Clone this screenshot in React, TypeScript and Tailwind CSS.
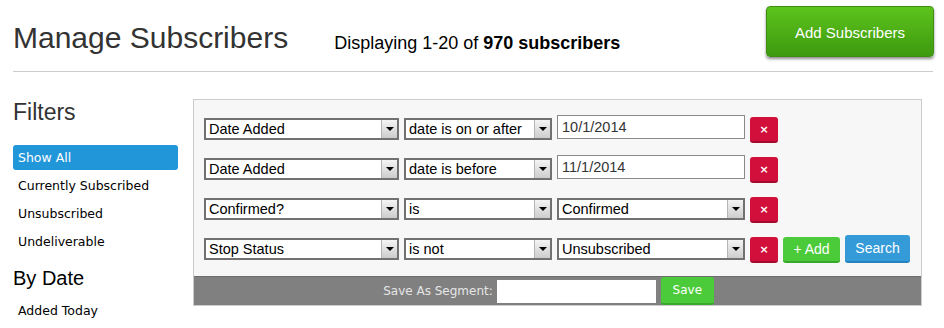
import React from "react";

const sideItems = ["Currently Subscribed", "Unsubscribed", "Undeliverable"];

function Select({ value, width }: { value: string; width: string }) {
  return (
    <div
      className={`${width} mt-[3px] h-[22px] flex items-stretch border-2 border-[#717171] bg-white`}
    >
      <span className="flex-1 pl-[3px] text-[14.5px] leading-[18px] text-black truncate">{value}</span>
      <span className="w-[16px] flex items-center justify-center border-l border-[#b5b5b5] bg-gradient-to-b from-[#f4f4f4] to-[#cdcdcd]">
        <span className="w-0 h-0 border-l-[4px] border-r-[4px] border-t-[4px] border-l-transparent border-r-transparent border-t-black" />
      </span>
    </div>
  );
}

function TextBox({ value }: { value: string }) {
  return (
    <div className="w-[188px] h-[24px] border border-[#8a8a8a] bg-white pl-[4px] text-[14.5px] leading-[22px] text-[#333]">
      {value}
    </div>
  );
}

function RemoveButton() {
  return (
    <button className="mt-[2px] w-[28px] h-[26px] rounded-[3px] bg-[#d20e3b] border-b-2 border-[#a50a2c] text-white text-[11px] font-bold leading-none font-['DejaVu_Sans',sans-serif]">
      ×
    </button>
  );
}

const rows = [
  { field: "Date Added", op: "date is on or after", value: "10/1/2014", text: true },
  { field: "Date Added", op: "date is before", value: "11/1/2014", text: true },
  { field: "Confirmed?", op: "is", value: "Confirmed", text: false },
  { field: "Stop Status", op: "is not", value: "Unsubscribed", text: false },
];

export default function App() {
  return (
    <div className="w-[944px] h-[328px] overflow-hidden bg-white pl-[13px] pr-[10px] font-['Liberation_Sans',Arial,sans-serif]">
      <header className="h-[71px] flex items-start">
        <h1 className="pt-[20px] text-[30px] leading-[36px] text-[#333]">Manage Subscribers</h1>
        <p className="ml-[46px] pt-[32px] text-[18px] leading-[22px] text-black">
          Displaying 1-20 of <strong className="font-bold">970 subscribers</strong>
        </p>
        <button className="ml-auto mt-[6px] w-[168px] h-[51px] pt-[3px] rounded-[4px] border border-[#3f8e12] bg-gradient-to-b from-[#5dc31c] to-[#3d9a0f] shadow-[0_2px_3px_rgba(0,0,0,0.45)] text-white text-[15px]">
          Add Subscribers
        </button>
      </header>
      <div className="h-px w-[920px] bg-[#cccccc]" />

      <div className="mt-[27px] flex items-start">
        <aside className="w-[165px] shrink-0">
          <h2 className="text-[23px] leading-[26px] text-[#333]">Filters</h2>
          <ul className="mt-[20px] flex flex-col gap-[3px] font-['DejaVu_Sans',Verdana,sans-serif] text-[12.5px]">
            <li className="h-[25px] rounded-[3px] bg-[#2196d9] pl-[5px] leading-[25px] text-white">Show All</li>
            {sideItems.map((item) => (
              <li key={item} className="h-[25px] pl-[5px] leading-[25px] text-black">
                {item}
              </li>
            ))}
          </ul>
          <h3 className="mt-[12px] text-[20px] leading-[24px] text-black">By Date</h3>
          <p className="mt-[8px] h-[25px] pl-[5px] leading-[25px] font-['DejaVu_Sans',Verdana,sans-serif] text-[12.5px] text-black">
            Added Today
          </p>
        </aside>

        <section className="ml-[15px] w-[729px] border border-[#cccccc] bg-[#f7f7f7]">
          <div className="pt-[15px] pb-[13px] pl-[10px] flex flex-col gap-[12px]">
            {rows.map((row, i) => (
              <div key={i} className="h-[28px] flex items-start gap-[5px]">
                <Select value={row.field} width="w-[195px]" />
                <Select value={row.op} width="w-[148px]" />
                {row.text ? (
                  <TextBox value={row.value} />
                ) : (
                  <Select value={row.value} width="w-[188px]" />
                )}
                <RemoveButton />
                {i === rows.length - 1 && (
                  <>
                    <button className="mt-[2px] w-[57px] h-[26px] rounded-[3px] bg-[#4ccb3a] border-b-2 border-[#38a82a] text-white text-[14px]">
                      + Add
                    </button>
                    <button className="w-[65px] h-[28px] rounded-[3px] bg-[#349bd8] border-b-2 border-[#2583bf] text-white text-[14px]">
                      Search
                    </button>
                  </>
                )}
              </div>
            ))}
          </div>
          <div className="h-[29px] border-t border-[#6d6d6d] bg-[#808080] flex items-center justify-center gap-[4px] pr-[18px]">
            <span className="font-['DejaVu_Sans',Verdana,sans-serif] text-[12px] text-[#e6e6e6]">Save As Segment:</span>
            <div className="w-[159px] h-[23px] bg-white" />
            <button className="ml-[1px] w-[53px] h-[28px] rounded-[3px] bg-[#4ccb3a] border-b-2 border-[#38a82a] text-white font-['DejaVu_Sans',Verdana,sans-serif] text-[12px]">
              Save
            </button>
          </div>
        </section>
      </div>
    </div>
  );
}
